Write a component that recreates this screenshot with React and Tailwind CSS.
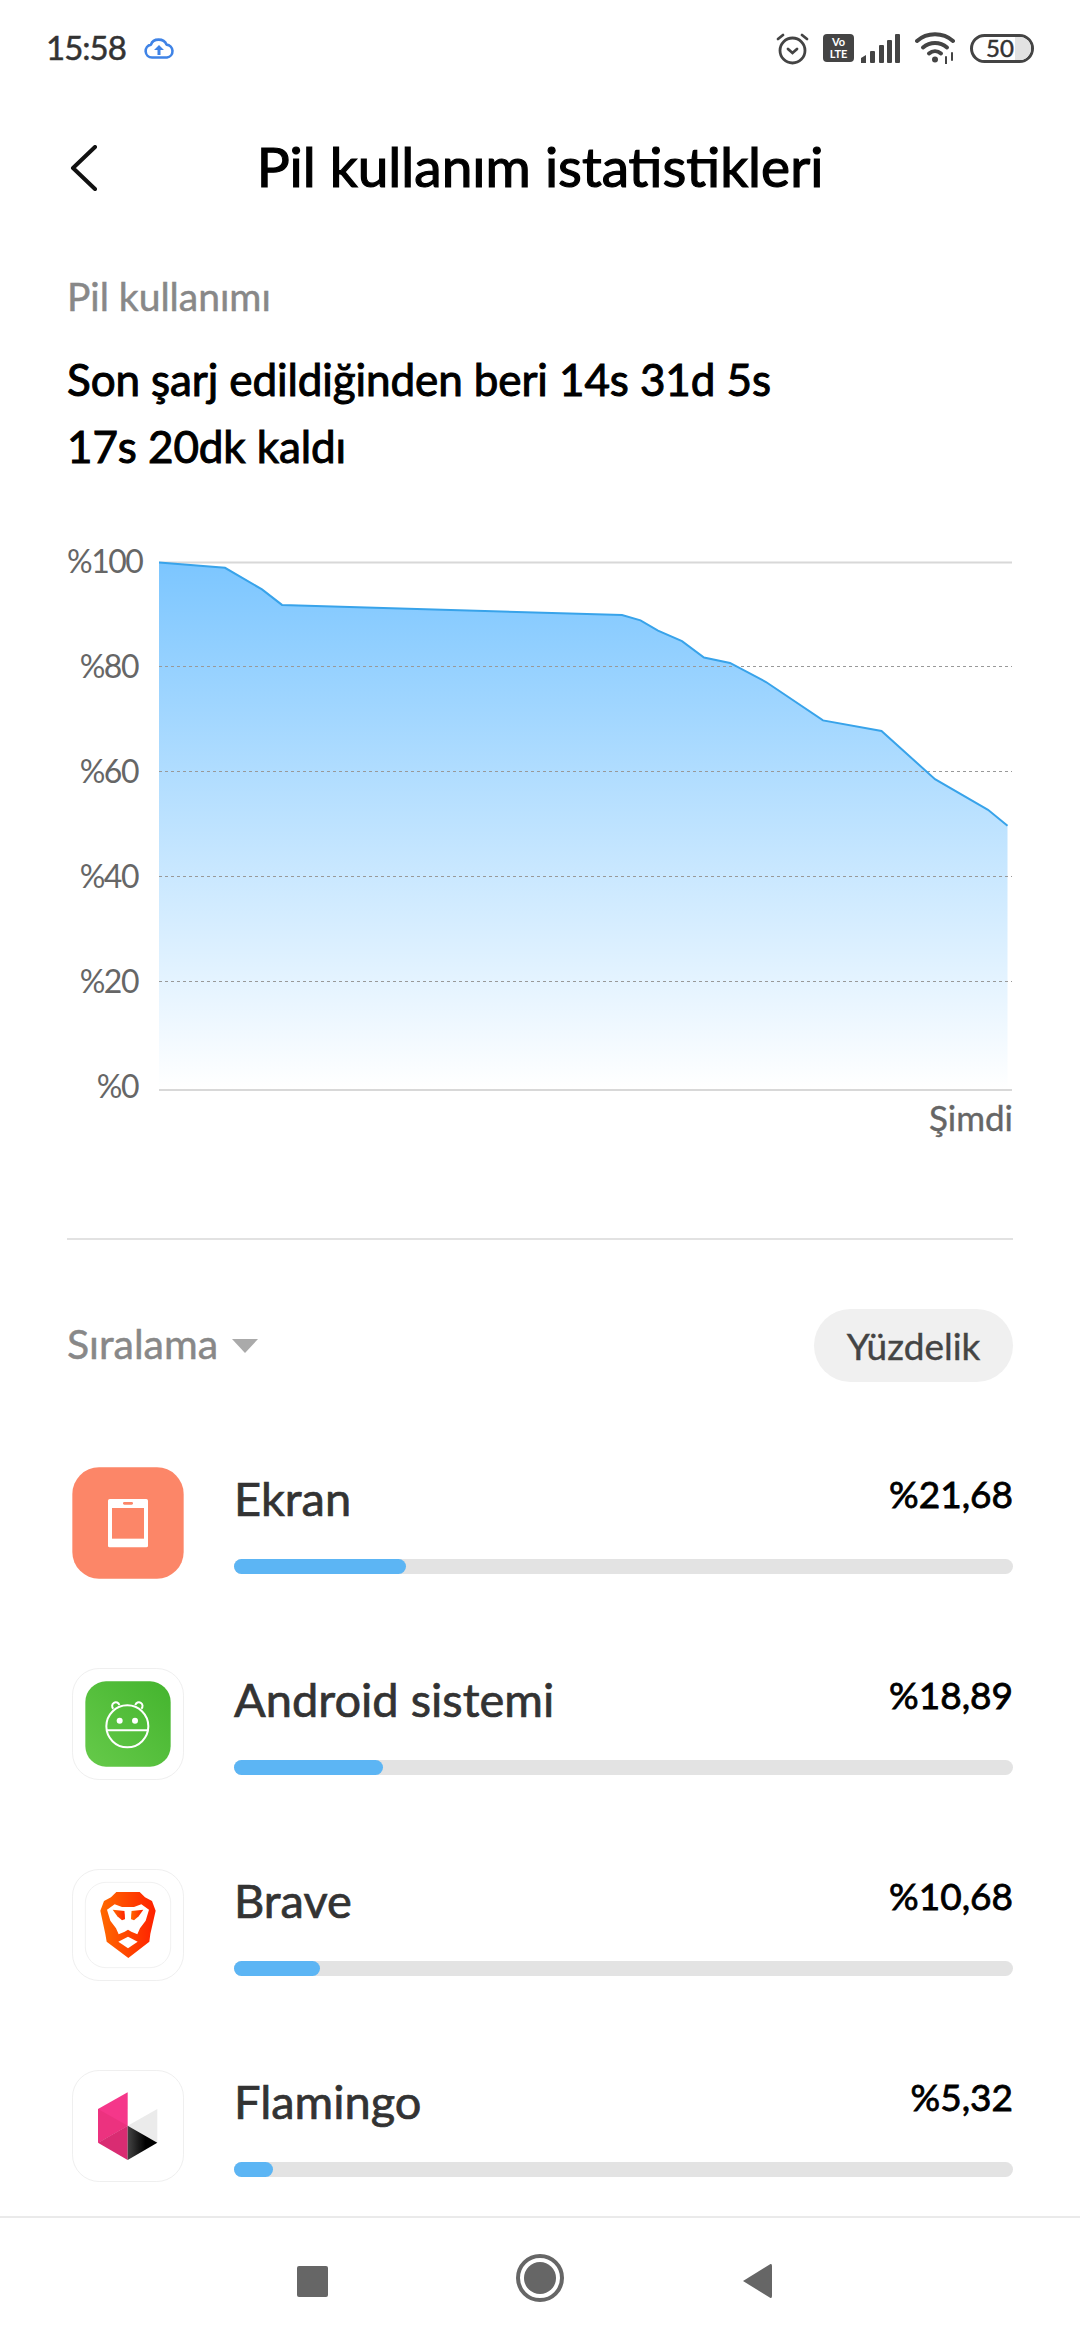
const line = [[0, 1.4], [66, 6.8], [103, 28.4], [123, 43.9], [463, 54.1], [481.5, 59.4], [499, 69.6], [523, 80.2], [545, 96.6], [571, 101.9], [607, 121], [664, 159.4], [722.5, 170], [776, 218.2], [829, 248.8], [848.5, 264.7]];
const linePoints = line.map((p) => p.join(',')).join(' ');
const axisLabels = ['%100', '%80', '%60', '%40', '%20', '%0'];

const apps = [
  { name: 'Ekran', percent: '%21,68', bar: 'w-[172px]', icon: <ScreenIcon /> },
  { name: 'Android sistemi', percent: '%18,89', bar: 'w-[149px]', icon: <AndroidIcon /> },
  { name: 'Brave', percent: '%10,68', bar: 'w-[86px]', icon: <BraveIcon /> },
  { name: 'Flamingo', percent: '%5,32', bar: 'w-[39px]', icon: <FlamingoIcon /> },
];

function ScreenIcon() {
  return (
    <svg viewBox="0 0 336 336" className="w-full h-full">
      <rect x="1" y="1" width="334" height="334" rx="80" fill="#fc8668" />
      <rect x="108" y="96" width="120" height="145" rx="5" fill="#fff" />
      <rect x="120" y="123" width="96" height="92" fill="#fc8668" />
      <rect x="153" y="105" width="30" height="8" rx="4" fill="#fc8668" />
    </svg>
  );
}

function AndroidIcon() {
  return (
    <svg viewBox="0 0 336 336" className="w-full h-full">
      <defs>
        <linearGradient id="droid" x1="0" y1="1" x2="1" y2="0">
          <stop offset="0" stopColor="#66ca4a" />
          <stop offset="1" stopColor="#44b42e" />
        </linearGradient>
      </defs>
      <rect x="1.5" y="1.5" width="333" height="333" rx="80" fill="#fff" stroke="#efefef" strokeWidth="3" />
      <rect x="40" y="40" width="256" height="256" rx="62" fill="url(#droid)" />
      <g fill="none" stroke="#fff" strokeWidth="6">
        <circle cx="166" cy="175" r="63" />
        <path d="M104 187H228" />
        <path d="M124 122a11 11 0 1 1 18-11" />
        <path d="M190 111a11 11 0 1 1 18 11" />
      </g>
      <circle cx="143" cy="158" r="9" fill="#fff" />
      <circle cx="189" cy="158" r="9" fill="#fff" />
    </svg>
  );
}

function BraveIcon() {
  return (
    <svg viewBox="0 0 336 336" className="w-full h-full">
      <defs>
        <linearGradient id="lion" x1="0" y1="0" x2="1" y2="0">
          <stop offset="0" stopColor="#ff6a00" />
          <stop offset="1" stopColor="#ff2000" />
        </linearGradient>
      </defs>
      <rect x="1.5" y="1.5" width="333" height="333" rx="80" fill="#fff" stroke="#efefef" strokeWidth="3" />
      <rect x="40" y="40" width="256" height="256" rx="62" fill="#fff" stroke="#f1f1f1" strokeWidth="3" />
      <path d="M133 69H203L219 85L240 96L251 125L235 195L232 218L169 267L104 218L100 195L85 125L96 96L117 85Z" fill="url(#lion)" />
      <path d="M105 122L128 106L150 114H186L208 106L231 122L221 155L204 178L196 196L178 188L168 182L158 188L140 196L132 178L115 155Z" fill="#fff" />
      <path d="M122 122L158 126L160 150L150 154L136 142Z" fill="url(#lion)" />
      <path d="M214 122L178 126L176 150L186 154L200 142Z" fill="url(#lion)" />
      <path d="M158 126H178L176 176L168 172L160 176Z" fill="#fff" />
      <path d="M139 218L168 203L197 218L168 238Z" fill="#fff" />
    </svg>
  );
}

function FlamingoIcon() {
  return (
    <svg viewBox="0 0 336 336" className="w-full h-full">
      <defs>
        <linearGradient id="flamingoDark" x1="0" y1="0" x2="1" y2="0">
          <stop offset="0" stopColor="#444" />
          <stop offset="0.6" stopColor="#000" />
        </linearGradient>
      </defs>
      <rect x="1.5" y="1.5" width="333" height="333" rx="80" fill="#fff" stroke="#efefef" strokeWidth="3" />
      <path d="M167 67L78 117V218L167 167Z" fill="#f5378a" />
      <path d="M78 117L167 167L78 218Z" fill="#ec327f" />
      <path d="M78 218L167 167V270Z" fill="#d92c72" />
      <path d="M167 167L256 117V218Z" fill="#ebebeb" />
      <path d="M167 167L256 218L167 270Z" fill="url(#flamingoDark)" />
    </svg>
  );
}

function StatusIcons() {
  return (
    <div className="flex items-center">
      <svg width="33" height="33" viewBox="0 0 33 33" fill="none" stroke="#444" strokeWidth="2.8" strokeLinecap="round">
        <circle cx="16.5" cy="18.5" r="12.5" />
        <path d="M12 17l4.5 4 4.5-4" />
        <path d="M2 7l5-4M31 7l-5-4" />
      </svg>
      <div className="ml-[14px] w-[31px] h-[28px] rounded-[4px] bg-[#444] text-white text-[11px] leading-[12px] font-bold text-center flex flex-col justify-center">
        <span>Vo</span>
        <span>LTE</span>
      </div>
      <svg width="39" height="29" viewBox="0 0 39 29" fill="#444" className="ml-[7px]">
        <path d="M0 29V24L5 21V29Z" />
        <rect x="9" y="17" width="5" height="12" rx="1" />
        <rect x="18" y="11" width="5" height="18" rx="1" />
        <rect x="26" y="6" width="5" height="23" rx="1" />
        <rect x="34" y="0" width="5" height="29" rx="1" />
      </svg>
      <svg width="40" height="32" viewBox="0 0 40 32" fill="none" stroke="#444" strokeWidth="4" strokeLinecap="round" className="ml-[15px]">
        <path d="M2 9C12 0 28 0 38 9" />
        <path d="M8 15.500C15 9.500 25 9.500 32 15.500" />
        <path d="M14 21.500C17.500 18.500 22.500 18.500 26 21.500" />
        <circle cx="20" cy="27.500" r="3" fill="#444" stroke="none" />
        <path d="M31 25v7M37 21v7" strokeWidth="2" />
      </svg>
      <div className="ml-[15px] w-[64px] h-[29px] rounded-full border-[3px] border-[#444] relative flex items-center overflow-hidden">
        <div className="absolute right-0 top-0 bottom-0 w-[16px] bg-[#e2e2e2]" />
        <span className="relative w-full text-center pr-[4px] text-[24px] leading-none text-[#333] [-webkit-text-stroke:0.5px_#333]">50</span>
      </div>
    </div>
  );
}

export default function App() {
  return (
    <div className="w-[1080px] h-[2340px] bg-white flex flex-col overflow-hidden [font-family:Lato,sans-serif]">
      <div className="h-[96px] shrink-0 pl-[46px] pr-[46px] flex items-center justify-between">
        <div className="flex items-center">
          <span className="text-[33px] tracking-[-1px] text-[#333] [-webkit-text-stroke:0.5px_#333]">15:58</span>
          <svg width="30" height="22" viewBox="0 0 30 22" fill="none" className="ml-[18px]">
            <path d="M8 20.500a6.500 6.500 0 0 1-1-12.900C9 1 20 1 22.500 7.600A6.500 6.500 0 0 1 23 20.500Z" stroke="#3f83e6" strokeWidth="2.6" strokeLinejoin="round" />
            <path d="M15 8l-5 5h3.500v5h3v-5H20Z" fill="#3f83e6" />
          </svg>
        </div>
        <StatusIcons />
      </div>

      <div className="h-[144px] shrink-0 pl-[70px] pr-[70px] grid grid-cols-[1fr_auto_1fr] items-center">
        <svg width="28" height="46" viewBox="0 0 28 46" fill="none" stroke="#111" strokeWidth="4" strokeLinecap="round" strokeLinejoin="round">
          <path d="M25 2L3 23L25 44" />
        </svg>
        <h1 className="text-[55px] leading-none font-normal text-black mb-[3px] [-webkit-text-stroke:1.2px_#000]">Pil kullanım istatistikleri</h1>
        <div />
      </div>

      <div className="flex-1 min-h-0 px-[67px] flex flex-col">
        <div className="mt-[31px] text-[39px] leading-[50px] text-[#888] [-webkit-text-stroke:0.5px_#888]">Pil kullanımı</div>
        <div className="mt-[25px] text-[44px] tracking-[-0.1px] leading-[67px] text-black [-webkit-text-stroke:1px_#000]">
          <div>Son şarj edildiğinden beri 14s 31d 5s</div>
          <div>17s 20dk kaldı</div>
        </div>

        <div className="mt-[28px] flex">
          <div className="w-[71px] shrink-0 text-right text-[32px] tracking-[-1.5px] leading-[105px] text-[#666]">
            {axisLabels.map((label) => (
              <div key={label}>{label}</div>
            ))}
          </div>
          <div className="ml-[21px] flex-1 pt-[53px]">
            <svg width="853" height="530" viewBox="0 0 853 530" className="block">
              <defs>
                <linearGradient id="area" x1="0" y1="0" x2="0" y2="1">
                  <stop offset="0" stopColor="#7cc6ff" />
                  <stop offset="1" stopColor="#ffffff" />
                </linearGradient>
              </defs>
              <path d="M0 1.500H853M0 529H853" stroke="#d8d8d8" strokeWidth="2" />
              <polygon points={`0,1.400 ${linePoints} 848.5,528 0,528`} fill="url(#area)" />
              <path d="M0 105.500H853M0 210.500H853M0 315.500H853M0 420.500H853" stroke="#999" strokeWidth="1" strokeDasharray="3 3" />
              <polyline points={linePoints} fill="none" stroke="#38a3ea" strokeWidth="2" />
            </svg>
            <div className="mt-[6px] text-right text-[35px] leading-[40px] text-[#666] [-webkit-text-stroke:0.4px_#666]">Şimdi</div>
          </div>
        </div>

        <div className="mt-[100px] h-[2px] bg-[#e2e2e2] shrink-0" />

        <div className="mt-[69px] h-[73px] shrink-0 flex items-center justify-between">
          <div className="flex items-center">
            <span className="text-[41px] mb-[3px] text-[#888] [-webkit-text-stroke:0.5px_#888]">Sıralama</span>
            <svg width="26" height="14" viewBox="0 0 26 14" className="ml-[14px]">
              <path d="M0 0H26L13 14Z" fill="#aaa" />
            </svg>
          </div>
          <div className="w-[199px] h-[73px] rounded-full bg-[#f0f0f0] flex items-center justify-center text-[37px] text-[#444] [-webkit-text-stroke:0.4px_#444]">Yüzdelik</div>
        </div>

        <div className="mt-[85px] flex flex-col gap-[89px]">
          {apps.map((app) => (
            <div key={app.name} className="h-[112px] pl-[5px] flex">
              <div className="w-[112px] h-[112px] shrink-0">{app.icon}</div>
              <div className="ml-[50px] flex-1">
                <div className="h-[92px] flex items-start justify-between">
                  <span className="text-[47px] leading-[62px] text-[#333] [-webkit-text-stroke:0.7px_#333]">{app.name}</span>
                  <span className="text-[37px] leading-[54px] text-black [-webkit-text-stroke:0.8px_#000]">{app.percent}</span>
                </div>
                <div className="h-[15px] rounded-full bg-[#e3e3e3]">
                  <div className={`h-full rounded-full bg-[#5cb5f4] ${app.bar}`} />
                </div>
              </div>
            </div>
          ))}
        </div>
      </div>

      <div className="h-[124px] shrink-0 border-t-2 border-[#eaeaea] bg-white pl-[297px] pt-[4px] flex items-center">
        <div className="w-[31px] h-[31px] rounded-[2px] bg-[#666]" />
        <svg width="48" height="48" viewBox="0 0 48 48" className="ml-[188px] mb-[6px]">
          <circle cx="24" cy="24" r="22" fill="none" stroke="#666" strokeWidth="4" />
          <circle cx="24" cy="24" r="16" fill="#666" />
        </svg>
        <svg width="30" height="36" viewBox="0 0 30 36" className="ml-[178px]">
          <path d="M28.500 1L1 18L28.500 35Q30 35.500 30 33V3Q30 .5 28.500 1Z" fill="#666" />
        </svg>
      </div>
    </div>
  );
}
